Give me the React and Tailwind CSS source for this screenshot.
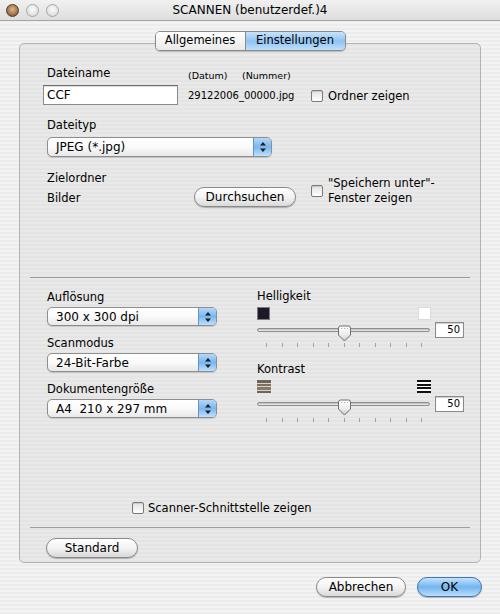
import React from "react";

const FONT = "font-['DejaVu_Sans','Liberation_Sans',sans-serif]";

function Checkbox() {
  return (
    <div className="w-[12px] h-[12px] shrink-0 rounded-[2px] border border-[#7a7a7a] bg-gradient-to-b from-[#e2e2e2] to-white shadow-[inset_0_1px_1px_rgba(0,0,0,0.12)]" />
  );
}

function AquaButton({ children, className = "", blue = false }) {
  const skin = blue
    ? "border-[#4573ad] bg-gradient-to-b from-[#c4e2fc] via-[#73b5f0] to-[#b9defc]"
    : "border-[#8a8a8a] bg-gradient-to-b from-white via-[#f3f3f3] to-[#d9d9d9]";
  return (
    <div
      className={`h-[20px] rounded-full border ${skin} shadow-[0_1px_1px_rgba(0,0,0,0.25)] flex items-center justify-center text-[12px] leading-none ${className}`}
    >
      {children}
    </div>
  );
}

function Arrows() {
  return (
    <svg width="6" height="10" viewBox="0 0 6 10">
      <path d="M3 0 L6 3.6 L0 3.6 Z" fill="#1c1c1c" />
      <path d="M0 6.4 L6 6.4 L3 10 Z" fill="#1c1c1c" />
    </svg>
  );
}

function Popup({ children, className = "", h = "h-[19px]" }) {
  return (
    <div
      className={`flex ${h} rounded-[5px] border border-[#8e8e8e] overflow-hidden bg-gradient-to-b from-white via-[#fafafa] to-[#e8e8e8] shadow-[0_1px_1px_rgba(0,0,0,0.15)] ${className}`}
    >
      <div className="flex-1 pl-[8px] flex items-center text-[12px] leading-none">{children}</div>
      <div className="w-[18px] border-l border-[#6d90bd] bg-gradient-to-b from-[#b4d8fa] via-[#78b6f0] to-[#bfe0fc] flex items-center justify-center">
        <Arrows />
      </div>
    </div>
  );
}

function Slider() {
  return (
    <div className="flex items-center h-[16px]">
      <div className="relative w-[173px] h-[16px]">
        <div className="absolute left-0 right-0 top-[6px] h-[4px] rounded-full border border-[#8f8f8f] bg-gradient-to-b from-[#b5b5b5] to-[#f2f2f2]" />
        <svg className="absolute left-[80px] top-[3px]" width="15" height="17" viewBox="0 0 15 17">
          <defs>
            <linearGradient id="thumbg" x1="0" y1="0" x2="0" y2="1">
              <stop offset="0" stopColor="#ffffff" />
              <stop offset="0.6" stopColor="#ececec" />
              <stop offset="1" stopColor="#c8c8c8" />
            </linearGradient>
          </defs>
          <path
            d="M1.5 3 Q1.5 1 3.5 1 L11.5 1 Q13.5 1 13.5 3 L13.5 10 L7.5 16 L1.5 10 Z"
            fill="url(#thumbg)"
            stroke="#6f6f6f"
            strokeWidth="1"
          />
          <path d="M4 3.5 L11 3.5" stroke="#bdbdbd" strokeWidth="1" strokeDasharray="1.5 1.5" />
        </svg>
      </div>
      <div className="ml-[5px] w-[29px] h-[16px] bg-white border border-[#8a8a8a] shadow-[inset_0_1px_1px_rgba(0,0,0,0.2)] flex items-center justify-end pr-[3px] text-[10px] leading-none">
        50
      </div>
    </div>
  );
}

function Ticks({ className = "" }) {
  const ticks = Array.from({ length: 11 });
  return (
    <div className={`ml-[9px] w-[156px] h-[4px] flex justify-between ${className}`}>
      {ticks.map((_, i) => (
        <div key={i} className="w-px h-[4px] bg-[#a3a3a3]" />
      ))}
    </div>
  );
}

function Light({ close = false }) {
  return close ? (
    <div className="w-[13px] h-[13px] rounded-full border border-[#4f3b27] bg-[image:radial-gradient(circle_at_50%_40%,#d9b98c_0%,#a57a4b_55%,#6b4a2b_100%)]" />
  ) : (
    <div className="w-[13px] h-[13px] rounded-full border border-[#a5a5a5] bg-[image:radial-gradient(circle_at_50%_40%,#fbfbfb_0%,#e4e4e4_60%,#c9c9c9_100%)]" />
  );
}

export default function App() {
  return (
    <div
      className={`${FONT} w-[500px] h-[614px] overflow-hidden text-[11.5px] text-black bg-[#efefef] bg-[image:repeating-linear-gradient(0deg,#ececec_0px,#ececec_2px,#f3f3f3_2px,#f3f3f3_4px)] flex flex-col`}
    >
      {/* Title bar */}
      <div className="h-[21px] shrink-0 grid grid-cols-[1fr_auto_1fr] items-center border-b border-[#a6a6a6] bg-gradient-to-b from-[#f1f1f1] to-[#dedede]">
        <div className="flex gap-[7px] pl-[6px]">
          <Light close />
          <Light />
          <Light />
        </div>
        <div className="text-[12px] leading-none">SCANNEN (benutzerdef.)4</div>
        <div />
      </div>

      {/* Tabs */}
      <div className="mt-[10px] h-[20px] shrink-0 flex justify-center relative z-10">
        <div className="flex rounded-[5px] border border-[#8a8a8a] overflow-hidden shadow-[0_1px_1px_rgba(0,0,0,0.2)]">
          <div className="w-[90px] flex items-center justify-center bg-gradient-to-b from-white to-[#e9e9e9] border-r border-[#8a8a8a] text-[11.5px]">
            Allgemeines
          </div>
          <div className="w-[99px] flex items-center justify-center bg-gradient-to-b from-[#c8e3fb] via-[#8ec3f2] to-[#c0e0fc] text-[11.5px]">
            Einstellungen
          </div>
        </div>
      </div>

      {/* Group box */}
      <div className="mx-[19px] -mt-[8px] h-[520px] shrink-0 rounded-[5px] border border-[#b2b2b2] bg-[#e6e6e6] bg-[image:repeating-linear-gradient(0deg,#e4e4e4_0px,#e4e4e4_2px,#e9e9e9_2px,#e9e9e9_4px)] flex flex-col">
        {/* Top section */}
        <div className="h-[233px] shrink-0 pt-[22px] pl-[27px] flex flex-col">
          <div className="flex">
            <div className="w-[131px] flex flex-col">
              <div className="h-[14px] leading-[14px]">Dateiname</div>
              <div className="mt-[5px] -ml-[4px] w-[135px] h-[20px] bg-white border border-[#8c8c8c] border-t-[#6f6f6f] shadow-[inset_0_1px_1px_rgba(0,0,0,0.15)] flex items-center pl-[3px] text-[12px]">
                CCF
              </div>
            </div>
            <div className="ml-[10px] w-[123px] flex flex-col">
              <div className="mt-[4px] flex text-[9.5px] leading-[12px]">
                <span className="w-[54px]">(Datum)</span>
                <span>(Nummer)</span>
              </div>
              <div className="mt-[8px] text-[10px] leading-[12px]">29122006_00000.jpg</div>
            </div>
            <div className="mt-[23px] h-[14px] flex items-center gap-[5px]">
              <Checkbox />
              <span className="leading-[14px]">Ordner zeigen</span>
            </div>
          </div>

          <div className="mt-[13px] h-[14px] leading-[14px]">Dateityp</div>
          <Popup className="mt-[5px] w-[225px]" h="h-[20px]">JPEG (*.jpg)</Popup>

          <div className="mt-[14px] flex">
            <div className="w-[147px] flex flex-col">
              <div className="h-[14px] leading-[14px]">Zielordner</div>
              <div className="mt-[6px] h-[14px] leading-[14px]">Bilder</div>
            </div>
            <AquaButton className="mt-[16px] w-[102px]">Durchsuchen</AquaButton>
            <div className="ml-[15px] flex items-start">
              <div className="mt-[14px]">
                <Checkbox />
              </div>
              <div className="ml-[5px] mt-[5px] leading-[15px]">
                <div>"Speichern unter"-</div>
                <div>Fenster zeigen</div>
              </div>
            </div>
          </div>
        </div>

        <div className="mx-[10px] h-px shrink-0 bg-[#9e9e9e]" />

        {/* Middle section */}
        <div className="h-[249px] shrink-0 pl-[27px] flex flex-col">
          <div className="flex pt-[12px]">
            <div className="w-[170px] flex flex-col">
              <div className="h-[14px] leading-[14px]">Auflösung</div>
              <Popup className="mt-[3px] w-[170px]">300 x 300 dpi</Popup>
              <div className="mt-[10px] h-[14px] leading-[14px]">Scanmodus</div>
              <Popup className="mt-[3px] w-[170px]">24-Bit-Farbe</Popup>
              <div className="mt-[10px] h-[14px] leading-[14px]">Dokumentengröße</div>
              <Popup className="mt-[3px] w-[170px]">A4&nbsp; 210 x 297 mm</Popup>
            </div>
            <div className="ml-[40px] -mt-[1px] flex flex-col">
              <div className="h-[14px] leading-[14px]">Helligkeit</div>
              <div className="mt-[4px] w-[174px] h-[13px] flex justify-between">
                <div className="w-[13px] h-[13px] bg-[#1e1829] border border-[#7d7a80]" />
                <div className="w-[13px] h-[13px] bg-white border border-[#dcdcdc]" />
              </div>
              <div className="mt-[2px]">
                <Slider />
              </div>
              <Ticks className="mt-[5px]" />

              <div className="mt-[15px] h-[14px] leading-[14px]">Kontrast</div>
              <div className="mt-[4px] w-[174px] h-[13px] flex justify-between">
                <div className="w-[14px] h-[13px] flex flex-col justify-between bg-[#d8d2c8]">
                  <div className="h-[2.5px] bg-[#6f6556]" />
                  <div className="h-[2.5px] bg-[#7a6f60]" />
                  <div className="h-[2.5px] bg-[#857a6b]" />
                  <div className="h-[2.5px] bg-[#6f6556]" />
                </div>
                <div className="w-[14px] h-[13px] flex flex-col justify-between bg-white">
                  <div className="h-[2px] bg-[#111]" />
                  <div className="h-[2px] bg-[#111]" />
                  <div className="h-[2px] bg-[#111]" />
                  <div className="h-[2px] bg-[#111]" />
                </div>
              </div>
              <div className="mt-[3px]">
                <Slider />
              </div>
              <Ticks className="mt-[6px]" />
            </div>
          </div>

          <div className="mt-auto mb-[12px] ml-[85px] h-[14px] flex items-center gap-[4px]">
            <Checkbox />
            <span className="leading-[14px]">Scanner-Schnittstelle zeigen</span>
          </div>
        </div>

        <div className="mx-[10px] h-px shrink-0 bg-[#9e9e9e]" />

        {/* Bottom section */}
        <div className="flex-1 pl-[26px] pt-[10px]">
          <AquaButton className="w-[92px]">Standard</AquaButton>
        </div>
      </div>

      {/* Footer */}
      <div className="mt-[14px] flex justify-end pr-[18px] gap-[11px]">
        <AquaButton className="w-[90px]">Abbrechen</AquaButton>
        <AquaButton className="w-[65px]" blue>
          OK
        </AquaButton>
      </div>
    </div>
  );
}
